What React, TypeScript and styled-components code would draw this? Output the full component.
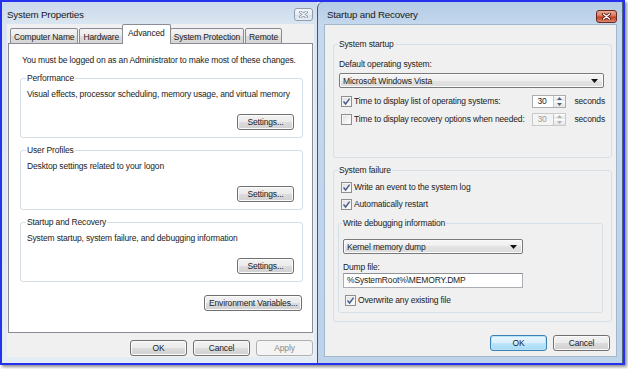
import styled, { createGlobalStyle } from "styled-components";

const GlobalStyle = createGlobalStyle`
  html, body {
    margin: 0;
    padding: 0;
    background: #ffffff;
  }
  body {
    font-family: "Liberation Sans", Arial, sans-serif;
    font-size: 8.5px;
    letter-spacing: -0.15px;
    color: #1b1b1b;
    white-space: nowrap;
  }
  * {
    box-sizing: border-box;
  }
`;

function CheckMark() {
  return (
    <svg width="9" height="9" viewBox="0 0 9 9">
      <path d="M1.5 4.6 L3.6 7 L7.6 1.6" fill="none" stroke="#4a5e8c" strokeWidth="1.5" />
    </svg>
  );
}

function CloseGlyph({ active }: { active?: boolean }) {
  return (
    <svg width="9" height="7" viewBox="0 0 9 7">
      <path
        d="M1.5 1 L7.5 6 M7.5 1 L1.5 6"
        stroke={active ? "#5a1a0c" : "#8c99a8"}
        strokeWidth="3"
        strokeLinecap="round"
      />
      <path
        d="M1.5 1 L7.5 6 M7.5 1 L1.5 6"
        stroke={active ? "#ffffff" : "#f4f7fa"}
        strokeWidth="1.4"
        strokeLinecap="round"
      />
    </svg>
  );
}

function Arrow() {
  return (
    <svg width="7" height="4" viewBox="0 0 7 4">
      <path d="M0 0 H7 L3.5 4 Z" fill="#111" />
    </svg>
  );
}

function Tiny({ up, disabled }: { up?: boolean; disabled?: boolean }) {
  return (
    <svg width="5" height="3" viewBox="0 0 5 3">
      <path d={up ? "M0 3 H5 L2.5 0 Z" : "M0 0 H5 L2.5 3 Z"} fill={disabled ? "#b0b0b0" : "#4d6185"} />
    </svg>
  );
}

function Spin({ value, disabled }: { value: string; disabled?: boolean }) {
  return (
    <SpinBox $disabled={disabled}>
      <SpinValue>{value}</SpinValue>
      <SpinButtons>
        <SpinHalf>
          <Tiny up disabled={disabled} />
        </SpinHalf>
        <SpinHalf>
          <Tiny disabled={disabled} />
        </SpinHalf>
      </SpinButtons>
    </SpinBox>
  );
}

function Check({ checked, children }: { checked?: boolean; children: React.ReactNode }) {
  return (
    <CheckRow>
      <Box>{checked && <CheckMark />}</Box>
      <span>{children}</span>
    </CheckRow>
  );
}

export default function App() {
  const tabs = ["Computer Name", "Hardware", "Advanced", "System Protection", "Remote"];

  return (
    <>
      <GlobalStyle />
      <Screen>
        <Frame>
          <LeftWindow>
            <TitleBar>
              <Title>System Properties</Title>
              <CloseBtn>
                <CloseGlyph />
              </CloseBtn>
            </TitleBar>
            <LeftClient>
              <TabRow>
                {tabs.map((t) => (
                  <Tab key={t} $selected={t === "Advanced"}>
                    {t}
                  </Tab>
                ))}
              </TabRow>
              <Panel>
                <Intro>You must be logged on as an Administrator to make most of these changes.</Intro>
                <Group>
                  <Legend>Performance</Legend>
                  <GroupText>Visual effects, processor scheduling, memory usage, and virtual memory</GroupText>
                  <GroupButton>Settings...</GroupButton>
                </Group>
                <Group>
                  <Legend>User Profiles</Legend>
                  <GroupText>Desktop settings related to your logon</GroupText>
                  <GroupButton>Settings...</GroupButton>
                </Group>
                <Group>
                  <Legend>Startup and Recovery</Legend>
                  <GroupText>System startup, system failure, and debugging information</GroupText>
                  <GroupButton>Settings...</GroupButton>
                </Group>
                <EnvButton>Environment Variables...</EnvButton>
              </Panel>
              <DialogButtons>
                <Button>OK</Button>
                <Button>Cancel</Button>
                <Button disabled>Apply</Button>
              </DialogButtons>
            </LeftClient>
          </LeftWindow>

          <RightWindow>
            <TitleBar>
              <Title $pad>Startup and Recovery</Title>
              <CloseBtn $active>
                <CloseGlyph active />
              </CloseBtn>
            </TitleBar>
            <RightClient>
              <Fieldset $bottom={31}>
                <Legend>System startup</Legend>
                <Label $top={8}>Default operating system:</Label>
                <Select $width={265} $top={3}>
                  <span>Microsoft Windows Vista</span>
                  <Arrow />
                </Select>
                <SpinRow $top={6}>
                  <Check checked>Time to display list of operating systems:</Check>
                  <Spin value="30" />
                  <Seconds>seconds</Seconds>
                </SpinRow>
                <SpinRow $top={4}>
                  <Check>Time to display recovery options when needed:</Check>
                  <Spin value="30" disabled />
                  <Seconds>seconds</Seconds>
                </SpinRow>
              </Fieldset>

              <Fieldset $bottom={8} $top={7}>
                <Legend>System failure</Legend>
                <Line $top={4}>
                  <Check checked>Write an event to the system log</Check>
                </Line>
                <Line $top={3}>
                  <Check checked>Automatically restart</Check>
                </Line>
                <InnerFieldset>
                  <Legend>Write debugging information</Legend>
                  <Select $width={180} $top={10}>
                    <span>Kernel memory dump</span>
                    <Arrow />
                  </Select>
                  <Label $top={7}>Dump file:</Label>
                  <TextInput>%SystemRoot%\MEMORY.DMP</TextInput>
                  <Line $top={5}>
                    <Check checked>Overwrite any existing file</Check>
                  </Line>
                </InnerFieldset>
              </Fieldset>

              <RightButtons>
                <Button $default>OK</Button>
                <Button>Cancel</Button>
              </RightButtons>
            </RightClient>
          </RightWindow>
        </Frame>
      </Screen>
    </>
  );
}

const Screen = styled.div`
  width: 628px;
  height: 369px;
  overflow: hidden;
  background: #ffffff;
`;

const Frame = styled.div`
  width: 625px;
  height: 365px;
  border: 2px solid #2431ee;
  display: flex;
  background: #dfe7f0;
  box-shadow: 2px 2px 3px rgba(0, 0, 0, 0.45);
`;

const LeftWindow = styled.section`
  width: 315px;
  display: flex;
  flex-direction: column;
  padding: 0 3px 6px 5px;
  background: linear-gradient(180deg, #c9d9ea 0px, #dbe6f1 24px, #e3ebf4 100%);
`;

const RightWindow = styled.section`
  flex: 1;
  display: flex;
  flex-direction: column;
  padding: 0 5px 6px 6px;
  border-left: 1px solid #3f5570;
  border-right: 1px solid #4d6481;
  border-top-left-radius: 6px;
  background: linear-gradient(180deg, #b3cbe5 0px, #c5d9ee 24px, #bdd3ea 100%);
`;

const TitleBar = styled.div`
  height: 22px;
  display: flex;
  justify-content: space-between;
  align-items: flex-start;
`;

const Title = styled.div<{ $pad?: boolean }>`
  font-size: 9.8px;
  letter-spacing: -0.2px;
  line-height: 12px;
  margin-top: 7px;
  padding-left: ${(p) => (p.$pad ? "3px" : "0")};
  color: #1a1a1a;
`;

const CloseBtn = styled.div<{ $active?: boolean }>`
  width: ${(p) => (p.$active ? "21px" : "19px")};
  height: 13px;
  margin-top: ${(p) => (p.$active ? "8px" : "6px")};
  margin-right: ${(p) => (p.$active ? "0" : "1px")};
  border-radius: 3px;
  display: flex;
  align-items: center;
  justify-content: center;
  border: 1px solid ${(p) => (p.$active ? "#6b2a1a" : "#8e9db0")};
  background: ${(p) =>
    p.$active
      ? "linear-gradient(180deg, #e9a998 0%, #d8765d 45%, #c23e22 55%, #d9876c 100%)"
      : "linear-gradient(180deg, #f5f8fb 0%, #e6ecf2 50%, #d8e0ea 55%, #e8eef4 100%)"};
`;

const LeftClient = styled.div`
  flex: 1;
  display: flex;
  flex-direction: column;
  background: #f0f0f0;
  padding: 0 0 0 1px;
`;

const TabRow = styled.div`
  height: 20px;
  display: flex;
  align-items: flex-end;
  padding-left: 2px;
  position: relative;
  z-index: 1;
  margin-bottom: -1px;
`;

const Tab = styled.div<{ $selected?: boolean }>`
  height: ${(p) => (p.$selected ? "20px" : "16px")};
  padding: ${(p) => (p.$selected ? "2px 5px 0" : "2px 3px 0")};
  margin: ${(p) => (p.$selected ? "0 -1px 0 -2px" : "0 1px 0 0")};
  border: 1px solid #898c95;
  border-bottom: ${(p) => (p.$selected ? "none" : "1px solid #898c95")};
  border-radius: 2px 2px 0 0;
  background: ${(p) =>
    p.$selected ? "#ffffff" : "linear-gradient(180deg, #f3f3f3 0%, #ebebeb 50%, #dddddd 50%, #d6d6d6 100%)"};
  position: relative;
  z-index: ${(p) => (p.$selected ? 2 : 1)};
  line-height: 12px;
`;

const Panel = styled.div`
  height: 290px;
  margin-right: 1px;
  background: #ffffff;
  border: 1px solid #898c95;
  padding: 10px 9px 0 11px;
  display: flex;
  flex-direction: column;
`;

const Intro = styled.div`
  line-height: 12px;
  margin: 0 0 7px 2px;
`;

const Group = styled.fieldset`
  margin: 0 0 7px 0;
  padding: 0 8px 7px 6px;
  border: 1px solid #d5dfe5;
  border-radius: 3px;
  display: flex;
  flex-direction: column;
  min-width: 0;
`;

const Legend = styled.legend`
  padding: 0 1px;
  margin-left: -1px;
  line-height: 11px;
`;

const GroupText = styled.div`
  line-height: 12px;
  margin-top: 4px;
`;

const Button = styled.button<{ $default?: boolean }>`
  height: 16px;
  min-width: 57px;
  padding: 0 4px;
  font-family: inherit;
  font-size: 8.5px;
  letter-spacing: -0.15px;
  line-height: 12px;
  white-space: nowrap;
  color: #1b1b1b;
  border-radius: 3px;
  border: 1px solid ${(p) => (p.$default ? "#3c7fb1" : "#707070")};
  background: ${(p) =>
    p.$default
      ? "linear-gradient(180deg, #eaf6fd 0%, #d9f0fc 50%, #bee6fd 50%, #a7d9f5 100%)"
      : "linear-gradient(180deg, #f2f2f2 0%, #ebebeb 50%, #dddddd 50%, #cfcfcf 100%)"};
  box-shadow: inset 0 0 0 1px ${(p) => (p.$default ? "#b6e4f9" : "#fbfbfb")};

  &:disabled {
    color: #8a8a8a;
    border-color: #adb2b5;
    background: #f4f4f4;
    box-shadow: none;
  }
`;

const GroupButton = styled(Button)`
  align-self: flex-end;
  margin-top: 14px;
`;

const EnvButton = styled(Button)`
  align-self: flex-end;
  margin: 6px 1px 0 0;
  width: 98px;
`;

const DialogButtons = styled.div`
  display: flex;
  justify-content: flex-end;
  gap: 6px;
  margin-top: 7px;
  padding-right: 1px;
`;

const RightClient = styled.div`
  flex: 1;
  display: flex;
  flex-direction: column;
  background: #f0f0f0;
  border: 1px solid #a3b7cc;
  padding: 14px 4px 0 8px;
`;

const Fieldset = styled.fieldset<{ $bottom: number; $top?: number }>`
  margin: ${(p) => p.$top ?? 0}px 0 0 0;
  padding: 0 6px ${(p) => p.$bottom}px 5px;
  border: 1px solid #d5dfe5;
  border-radius: 3px;
  display: flex;
  flex-direction: column;
  min-width: 0;
`;

const InnerFieldset = styled(Fieldset).attrs({ $bottom: 5, $top: 7 })`
  margin-left: -1px;
  margin-right: 2px;
  padding-left: 4px;
`;

const Label = styled.div<{ $top: number }>`
  line-height: 12px;
  margin-top: ${(p) => p.$top}px;
`;

const Select = styled.div<{ $width: number; $top: number }>`
  width: ${(p) => p.$width}px;
  height: 15px;
  margin-top: ${(p) => p.$top}px;
  padding: 0 5px 0 3px;
  display: flex;
  align-items: center;
  justify-content: space-between;
  border: 1px solid #7a7a7a;
  border-radius: 2px;
  background: linear-gradient(180deg, #f6f6f6 0%, #eeeeee 50%, #e3e3e3 50%, #dcdcdc 100%);
  box-shadow: inset 0 0 0 1px #fafafa;
`;

const TextInput = styled.div`
  width: 180px;
  height: 15px;
  padding: 0 3px;
  line-height: 13px;
  background: #ffffff;
  border: 1px solid #abadb3;
  border-top-color: #8f9298;
`;

const Line = styled.div<{ $top: number }>`
  margin-top: ${(p) => p.$top}px;
  height: 14px;
  display: flex;
  align-items: center;
`;

const SpinRow = styled(Line)`
  justify-content: space-between;
`;

const CheckRow = styled.label`
  flex: 1;
  display: flex;
  align-items: center;
  gap: 2px;
  padding-left: 2px;
  line-height: 12px;
`;

const Box = styled.span`
  width: 11px;
  height: 11px;
  border: 1px solid #8e8f8f;
  background: linear-gradient(135deg, #dcdcdc 0%, #f4f4f4 60%, #ffffff 100%);
  box-shadow: inset 0 0 0 1px #f4f4f4;
  display: flex;
  align-items: center;
  justify-content: center;
`;

const SpinBox = styled.div<{ $disabled?: boolean }>`
  width: 34px;
  height: 13px;
  display: flex;
  border: 1px solid ${(p) => (p.$disabled ? "#c9c9c9" : "#abadb3")};
  background: ${(p) => (p.$disabled ? "#f4f4f4" : "#ffffff")};
  color: ${(p) => (p.$disabled ? "#9a9a9a" : "#1b1b1b")};
`;

const SpinValue = styled.span`
  flex: 1;
  padding-left: 4px;
  line-height: 11px;
`;

const SpinButtons = styled.span`
  width: 12px;
  display: flex;
  flex-direction: column;
  border-left: 1px solid #c4c8ce;
`;

const SpinHalf = styled.span`
  flex: 1;
  display: flex;
  align-items: center;
  justify-content: center;
  background: linear-gradient(180deg, #f7f7f7, #e4e4e4);
  border-top: 1px solid #ffffff;
`;

const Seconds = styled.span`
  margin-left: 8px;
  line-height: 12px;
`;

const RightButtons = styled.div`
  display: flex;
  justify-content: flex-end;
  gap: 6px;
  margin: 13px 2px 0 0;
`;
